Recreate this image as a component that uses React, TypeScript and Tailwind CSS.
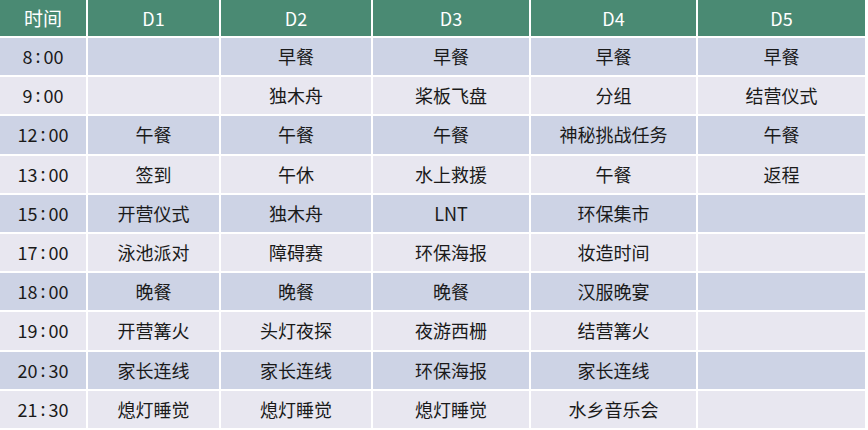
import React from 'react'

const days = ['D1', 'D2', 'D3', 'D4', 'D5']

const rows: [string, string, string[]][] = [
  ['8', '00', ['', '早餐', '早餐', '早餐', '早餐']],
  ['9', '00', ['', '独木舟', '桨板飞盘', '分组', '结营仪式']],
  ['12', '00', ['午餐', '午餐', '午餐', '神秘挑战任务', '午餐']],
  ['13', '00', ['签到', '午休', '水上救援', '午餐', '返程']],
  ['15', '00', ['开营仪式', '独木舟', 'LNT', '环保集市', '']],
  ['17', '00', ['泳池派对', '障碍赛', '环保海报', '妆造时间', '']],
  ['18', '00', ['晚餐', '晚餐', '晚餐', '汉服晚宴', '']],
  ['19', '00', ['开营篝火', '头灯夜探', '夜游西栅', '结营篝火', '']],
  ['20', '30', ['家长连线', '家长连线', '环保海报', '家长连线', '']],
  ['21', '30', ['熄灯睡觉', '熄灯睡觉', '熄灯睡觉', '水乡音乐会', '']],
]

export default function App() {
  return (
    <div
      className="w-[868px] h-[430px] bg-white pr-[2px] pb-[2px] overflow-hidden"
      style={{ fontFamily: '"Noto Sans CJK SC", "Noto Sans", sans-serif' }}
    >
      <div className="grid grid-cols-[86px_131px_150px_156px_165px_167px] gap-[2px] text-[18px] text-[#1a1a1a]">
        <div className="h-[36px] bg-[#4a8a73] text-white text-[19px] flex items-center justify-center">时间</div>
        {days.map((d) => (
          <div key={d} className="h-[36px] bg-[#4a8a73] text-white flex items-center justify-center">
            {d}
          </div>
        ))}
        {rows.map(([h, m, cells], i) => {
          const bg = i % 2 === 0 ? 'bg-[#cdd3e5]' : 'bg-[#e8e7f0]'
          return (
            <React.Fragment key={h}>
              <div className={`h-[37.2px] ${bg} flex items-center justify-center`}>
                {h}
                <span className="mx-[3px] relative -top-[1px]">:</span>
                {m}
              </div>
              {cells.map((c, j) => (
                <div key={j} className={`h-[37.2px] ${bg} flex items-center justify-center`}>
                  {c}
                </div>
              ))}
            </React.Fragment>
          )
        })}
      </div>
    </div>
  )
}
